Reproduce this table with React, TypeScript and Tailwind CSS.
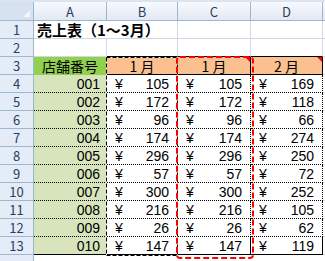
import React from "react";

const ids = ["001", "002", "003", "004", "005", "006", "007", "008", "009", "010"];
const jan = [105, 172, 96, 174, 296, 57, 300, 216, 26, 147];
const feb = [169, 118, 66, 274, 250, 72, 252, 105, 62, 119];

function RowHead({ n }: { n?: number }) {
  return (
    <div className="w-[34px] shrink-0 h-full flex items-center justify-center border-r border-b border-[#9eb6ce] bg-[#e4ecf7] text-[13px] text-[#2b3f5c] leading-none">
      {n}
    </div>
  );
}

function ColHead({ label, w }: { label: string; w: string }) {
  return (
    <div
      className={`${w} shrink-0 h-full flex items-center justify-center border-r border-b border-[#9eb6ce] bg-linear-to-b from-[#f7f9fd] to-[#e2e9f3] text-[13px] text-[#2b3f5c] leading-none`}
    >
      {label}
    </div>
  );
}

function Money({ v, w, last }: { v: number; w: string; last?: boolean }) {
  return (
    <div
      className={`${w} shrink-0 h-full flex items-center justify-between px-[8px] bg-white border-r border-black ${
        last ? "border-b border-solid" : "border-b border-dotted"
      } font-['Liberation_Sans',sans-serif] text-[14px] leading-none`}
    >
      <span>¥</span>
      <span>{v}</span>
    </div>
  );
}

function MonthHead({ label, w, note }: { label: string; w: string; note?: boolean }) {
  return (
    <div
      className={`${w} shrink-0 h-full relative flex items-center justify-center bg-[#fac090] border-r border-b border-black text-[14px] leading-none`}
    >
      <span className="tracking-[3px] pl-[3px]">{label}</span>
      {note && (
        <span className="absolute right-0 top-0 w-[5px] h-[5px] bg-[#ff0000] [clip-path:polygon(0_0,100%_0,100%_100%)]" />
      )}
    </div>
  );
}

export default function App() {
  return (
    <div className="relative w-[325px] h-[261px] overflow-hidden bg-white font-['Noto_Sans_CJK_JP',sans-serif] text-black">
      {/* strip above the column headers */}
      <div className="h-[2px] bg-[#dbe5f2]" />

      {/* column headers */}
      <div className="flex h-[19px]">
        <div className="w-[34px] shrink-0 h-full relative border-r border-b border-[#9eb6ce] bg-[#d7e2f1]">
          <span className="absolute right-[3px] bottom-[3px] w-[7px] h-[7px] bg-[#f3f6fb] [clip-path:polygon(100%_0,100%_100%,0_100%)]" />
        </div>
        <ColHead label="A" w="w-[73px]" />
        <ColHead label="B" w="w-[71px]" />
        <ColHead label="C" w="w-[73px]" />
        <ColHead label="D" w="w-[72px]" />
        <div className="flex-1 h-full border-b border-[#9eb6ce] bg-linear-to-b from-[#f7f9fd] to-[#e2e9f3]" />
      </div>

      {/* row 1: title */}
      <div className="flex h-[18px]">
        <RowHead n={1} />
        <div className="w-[144px] shrink-0 h-full flex items-center pl-[3px] border-r border-b border-[#d0d7e5] text-[15px] font-bold whitespace-nowrap leading-none">
          売上表（1～3月）
        </div>
        <div className="w-[73px] shrink-0 h-full border-r border-b border-[#d0d7e5]" />
        <div className="w-[72px] shrink-0 h-full border-r border-b border-[#d0d7e5]" />
        <div className="flex-1 h-full border-b border-[#d0d7e5]" />
      </div>

      {/* row 2 */}
      <div className="flex h-[18px]">
        <RowHead n={2} />
        <div className="w-[73px] shrink-0 h-full border-r border-b border-[#d0d7e5]" />
        <div className="w-[71px] shrink-0 h-full border-r border-[#d0d7e5] border-b-black border-b" />
        <div className="w-[73px] shrink-0 h-full border-r border-[#d0d7e5] border-b-black border-b" />
        <div className="w-[72px] shrink-0 h-full border-r border-[#d0d7e5] border-b-black border-b" />
        <div className="flex-1 h-full border-b border-[#d0d7e5]" />
      </div>

      {/* row 3: headings */}
      <div className="flex h-[18px]">
        <RowHead n={3} />
        <div className="w-[73px] shrink-0 h-full flex items-center justify-center bg-[#92d050] border-r border-black border-b border-b-[#92d050] text-[14px] leading-none">
          店舗番号
        </div>
        <MonthHead label="1月" w="w-[71px]" />
        <MonthHead label="1月" w="w-[73px]" note />
        <MonthHead label="2月" w="w-[72px]" note />
        <div className="flex-1 h-full border-b border-[#d0d7e5]" />
      </div>

      {/* rows 4-13: data */}
      {ids.map((id, i) => {
        const last = i === ids.length - 1;
        return (
          <div key={id} className="flex h-[18px]">
            <RowHead n={i + 4} />
            <div
              className={`w-[73px] shrink-0 h-full flex items-center justify-end pr-[6px] bg-[#d7e4bc] border-r border-black ${
                last ? "border-b border-solid" : "border-b border-dotted"
              } font-['Liberation_Sans',sans-serif] text-[14px] leading-none`}
            >
              {id}
            </div>
            <Money v={jan[i]} w="w-[71px]" last={last} />
            <Money v={jan[i]} w="w-[73px]" last={last} />
            <Money v={feb[i]} w="w-[72px]" last={last} />
            <div className="flex-1 h-full border-b border-[#d0d7e5]" />
          </div>
        );
      })}

      {/* row 14, only its top edge shows */}
      <div className="flex h-[18px]">
        <RowHead />
        <div className="flex-1 h-full" />
      </div>

      {/* copy marquee around B3:B13 and paste range around C3:C13 */}
      <svg
        className="absolute left-0 top-0 pointer-events-none"
        width="325"
        height="261"
        viewBox="0 0 325 261"
      >
        <rect x="106.5" y="57.5" width="71" height="198" fill="none" stroke="#ffffff" strokeWidth="1" />
        <rect
          x="106.5"
          y="57.5"
          width="71"
          height="198"
          fill="none"
          stroke="#000000"
          strokeWidth="1"
          strokeDasharray="4 2"
        />
        <rect
          x="177"
          y="57"
          width="76"
          height="201"
          rx="3"
          fill="none"
          stroke="#ff0000"
          strokeWidth="2"
          strokeDasharray="6 3"
        />
      </svg>
    </div>
  );
}
